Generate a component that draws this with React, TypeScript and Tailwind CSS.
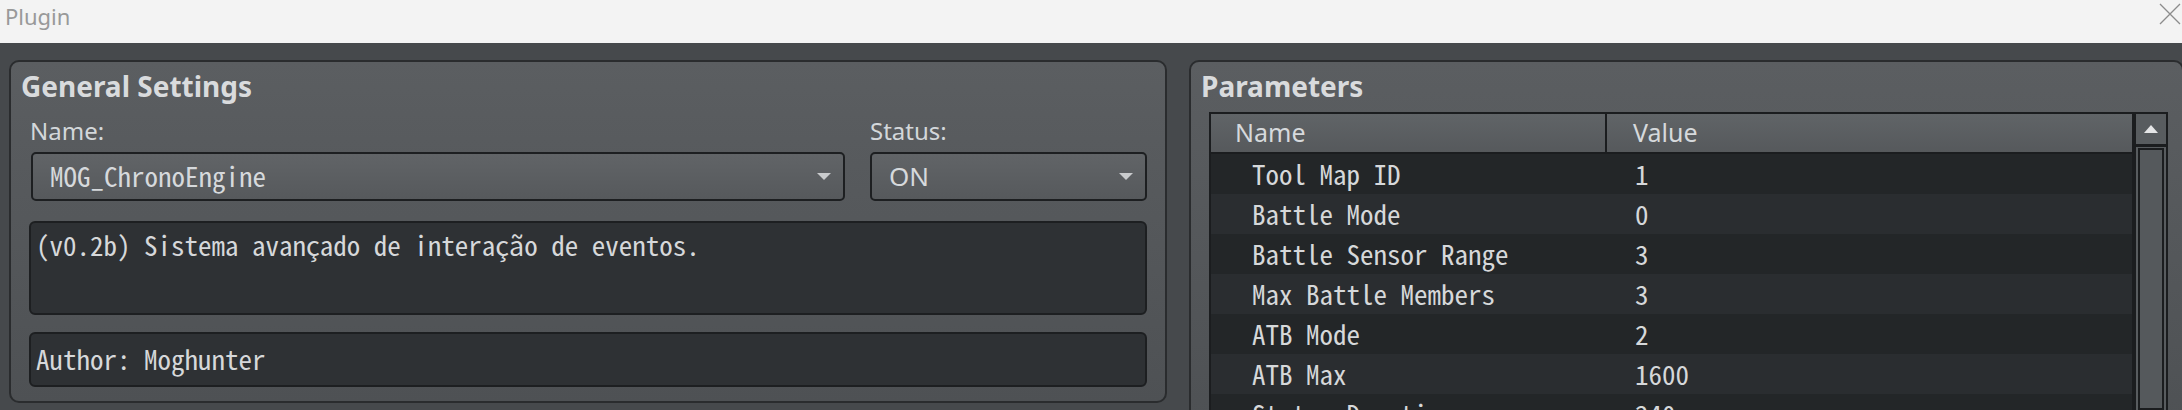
import React from 'react';

type Param = { name: string; value: string };

const params: Param[] = [
  { name: 'Tool Map ID', value: '1' },
  { name: 'Battle Mode', value: '0' },
  { name: 'Battle Sensor Range', value: '3' },
  { name: 'Max Battle Members', value: '3' },
  { name: 'ATB Mode', value: '2' },
  { name: 'ATB Max', value: '1600' },
  { name: 'States Duration', value: '240' },
  { name: 'Turn Duration', value: '60' },
];

const sans = "font-['Noto_Sans',sans-serif]";
const mono = "font-['Noto_Sans_Mono_CJK_JP','DejaVu_Sans_Mono',monospace]";

const DropArrow: React.FC = () => (
  <svg width="14" height="7" viewBox="0 0 14 7" className="shrink-0">
    <polygon points="0,0 14,0 7,7" fill="#c9cbcd" />
  </svg>
);

const Select: React.FC<{ value: string; isMono?: boolean; className?: string }> = ({ value, isMono, className }) => (
  <div
    className={`h-[49px] flex items-center justify-between pl-[17px] pr-[12px] rounded-[5px] border-2 border-[#1d1f21] bg-linear-to-b from-[#616467] to-[#56595c] text-[#d6d9dc] ${className ?? ''}`}
  >
    <span className={isMono ? `${mono} text-[27px]` : `${sans} text-[26px]`}>{value}</span>
    <DropArrow />
  </div>
);

const PanelTitle: React.FC<{ children: React.ReactNode }> = ({ children }) => (
  <div className={`${sans} font-bold text-[28px] leading-[34px] text-[#d9dbdd] pl-[10px]`}>{children}</div>
);

export default function App() {
  return (
    <div className="w-[2182px] h-[410px] overflow-hidden flex flex-col bg-[#46494c]">
      {/* window title bar */}
      <div className="h-[43px] shrink-0 bg-[#f3f3f3] flex items-start justify-between">
        <span className={`${sans} text-[22px] leading-[22px] text-[#999999] pl-[5px] pt-[5px]`}>Plugin</span>
        <svg width="22" height="22" viewBox="0 0 22 22" className="mt-[3px] mr-[1px]">
          <path d="M1 1 L21 21 M21 1 L1 21" stroke="#8c8c8c" strokeWidth="1.3" />
        </svg>
      </div>

      <div className="flex gap-[22px] pl-[9px] pt-[17px]">
        {/* General Settings */}
        <div className="w-[1158px] h-[343px] shrink-0 rounded-[10px] border-2 border-[#2a2c2e] bg-linear-to-b from-[#5b5e61] to-[#4e5154] pt-[7px]">
          <PanelTitle>General Settings</PanelTitle>
          <div className="px-[18px]">
            <div className="flex gap-[25px] mt-[13px]">
              <div className="flex-1 flex flex-col">
                <div className={`${sans} text-[24px] leading-[30px] text-[#d3d7da] pl-[1px]`}>Name:</div>
                <Select value="MOG_ChronoEngine" isMono className="mt-[6px] ml-[2px]" />
              </div>
              <div className="w-[277px] flex flex-col">
                <div className={`${sans} text-[24px] leading-[30px] text-[#d3d7da] pl-[-2px]`}>Status:</div>
                <Select value="ON" className="mt-[6px]" />
              </div>
            </div>
            <div className={`mt-[20px] h-[94px] rounded-[6px] border-2 border-[#1d1f21] bg-[#2e3134] pl-[5px] pt-[7px] ${mono} text-[27px] leading-[30px] text-[#d6d8da]`}>
              (v0.2b) Sistema avançado de interação de eventos.
            </div>
            <div className={`mt-[17px] h-[55px] rounded-[6px] border-2 border-[#1d1f21] bg-[#2e3134] pl-[5px] flex items-center ${mono} text-[27px] text-[#d6d8da]`}>
              Author: Moghunter
            </div>
          </div>
        </div>

        {/* Parameters */}
        <div className="w-[995px] h-[370px] shrink-0 rounded-t-[10px] border-2 border-[#2a2c2e] bg-linear-to-b from-[#5b5e61] to-[#4e5154] pt-[7px]">
          <PanelTitle>Parameters</PanelTitle>
          <div className="mt-[9px] ml-[18px] flex">
            {/* table */}
            <div className="w-[925px] h-[300px] border-2 border-[#1b1d1f] bg-[#232628] overflow-hidden">
              <div className="h-[40px] flex border-b-2 border-[#1b1d1f] bg-linear-to-b from-[#606467] to-[#56595c]">
                <div className={`w-[396px] border-r-2 border-[#1b1d1f] flex items-center pl-[24px] ${sans} text-[25px] text-[#d6d9dc]`}>
                  Name
                </div>
                <div className={`flex-1 flex items-center pl-[26px] ${sans} text-[25px] text-[#d6d9dc]`}>Value</div>
              </div>
              {params.map((p, i) => (
                <div
                  key={p.name}
                  className={`h-[40px] flex items-center ${mono} text-[27px] text-[#d6d8da] ${i % 2 === 0 ? 'bg-[#232628]' : 'bg-[#2a2d30]'}`}
                >
                  <div className="w-[398px] pl-[41px]">{p.name}</div>
                  <div className="pl-[26px]">{p.value}</div>
                </div>
              ))}
            </div>
            {/* vertical scrollbar */}
            <div className="w-[34px] h-[300px] border-2 border-[#1b1d1f] bg-[#585c5f] flex flex-col">
              <div className="h-[30px] shrink-0 flex items-center justify-center">
                <svg width="14" height="8" viewBox="0 0 14 8">
                  <polygon points="7,0 14,8 0,8" fill="#e4e5e6" />
                </svg>
              </div>
              <div className="h-[3px] shrink-0 bg-[#1b1d1f]" />
              <div className="flex-1 px-[2px] pt-[1px]">
                <div className="h-full border-2 border-[#1b1d1f] bg-[#55595c]" />
              </div>
            </div>
          </div>
        </div>
      </div>
    </div>
  );
}
